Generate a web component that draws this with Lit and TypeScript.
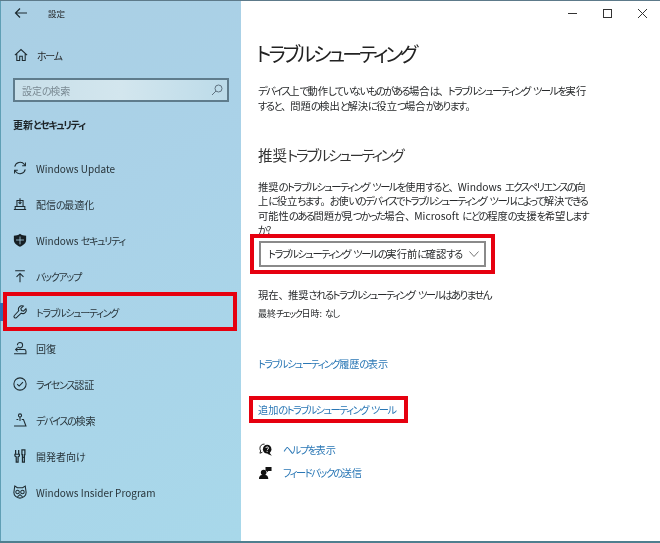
import { LitElement, html, css, svg } from "lit";
import { customElement } from "lit/decorators.js";

const ic = (body: unknown) => html`<svg class="ic" viewBox="0 0 16 16" fill="none" stroke="#1d2a30" stroke-width="1.2">${body}</svg>`;

const jp = (text: string) =>
  text.split(/([\u3040-\u30ff]+|[、。]+)/).map((part, i) => {
    if (i % 2 === 0) return part;
    return /[、。]/.test(part) ? html`<span class="p">${part}</span>` : html`<span class="k">${part}</span>`;
  });

const icons: Record<string, unknown> = {
  home: svg`<path d="M1 8.2 8 1.8 15 8.2M3.2 6.5V14.2H6.5V9.5H9.5V14.2H12.8V6.5"/>`,
  update: svg`<path d="M2 6.5A6.2 6.2 0 0 1 13 4L14 5.2M14 9.5A6.2 6.2 0 0 1 3 12L2 10.8"/><path d="M14.2 1.8V5.5H10.5M1.8 14.2V10.5H5.5"/>`,
  delivery: svg`<path d="M1 14.2H15M2.5 14.2V10.8H13.5V14.2M4.5 10.8V4H11.5V10.8M8 1.5V7.5M6.3 6 8 7.7 9.7 6"/>`,
  shield: svg`<path fill="#161f24" stroke="none" d="M8 .8C10 2.4 12.6 3 15 3V8C15 11.6 11.8 14.2 8 15.6 4.2 14.2 1 11.6 1 8V3C3.4 3 6 2.4 8 .8Z"/><path stroke="#a9d3e8" stroke-width=".9" d="M8 4V13M3.5 8H12.5"/>`,
  backup: svg`<path d="M2.5 2H13.5M8 15V5M4 9 8 5 12 9"/>`,
  wrench: svg`<path d="M14.8 4.2 12 7 9.6 6.4 9 4 11.8 1.2A4 4 0 0 0 6.6 6.6L1.6 12A1.7 1.7 0 0 0 4 14.4L9.4 9.4A4 4 0 0 0 14.8 4.2Z"/>`,
  recovery: svg`<path d="M1.2 14.5H14.8V11.8C14.8 10.6 13.9 9.8 12.8 9.8H3M5.2 7.6 3 9.8 5.2 12M5 4.8A3 3 0 1 1 11 4.8 3 3 0 0 1 5.5 6.5"/>`,
  check: svg`<circle cx="8" cy="8" r="7"/><path d="M4.8 8.2 7 10.4 11.4 5.8"/>`,
  find: svg`<circle cx="8" cy="2.8" r="1.8"/><path d="M8 4.6V9M1.2 14.8H14.8L12 7.5H10M6 7.5H4Z"/>`,
  dev: svg`<path stroke-width="1.4" d="M3 1V6M6.5 1V6M2.2 6H7.3V8L5.8 9V15H3.7V9L2.2 8ZM10.2 1H13.6V6.5H13V15H10.8V6.5H10.2Z"/><path d="M10.8 9.5H13"/>`,
  insider: svg`<path d="M2 1.2 5 3.2H11L14 1.2 15 8.5A7 6.5 0 0 1 8 15 7 6.5 0 0 1 1 8.5Z"/><circle cx="5.2" cy="8" r="2"/><circle cx="10.8" cy="8" r="2"/><path d="M5 13.5 8 11 11 13.5"/>`,
};

const nav = [
  ["update", "Windows Update"],
  ["delivery", "配信の最適化"],
  ["shield", "Windows セキュリティ"],
  ["backup", "バックアップ"],
  ["wrench", "トラブルシューティング"],
  ["recovery", "回復"],
  ["check", "ライセンス認証"],
  ["find", "デバイスの検索"],
  ["dev", "開発者向け"],
  ["insider", "Windows Insider Program"],
];

@customElement("app-root")
export class AppRoot extends LitElement {
  static styles = css`
    :host {
      display: block;
      width: 660px;
      height: 543px;
      overflow: hidden;
      font-family: "Noto Sans CJK JP", "Noto Sans", sans-serif;
      font-feature-settings: "palt";
      color: #26282a;
      font-size: 10.3px;
    }
    .k { letter-spacing: -0.13em; }
    .p { font-feature-settings: normal; letter-spacing: -0.1em; }
    .window {
      box-sizing: border-box;
      display: flex;
      width: 660px;
      height: 543px;
      border-top: 1px solid #5d7a8a;
      border-bottom: 2px solid #4f7f8f;
      background: #fff;
    }
    .side {
      box-sizing: border-box;
      width: 241px;
      flex: none;
      border-left: 1px solid #5f9fb5;
      background: linear-gradient(150deg, #aacfe4 0%, #aad2e8 40%, #a8d8ea 100%);
      display: flex;
      flex-direction: column;
      filter: blur(0.25px);
    }
    .top {
      height: 23px;
      display: flex;
      align-items: center;
      padding-left: 13px;
      font-size: 8.5px;
      gap: 20px;
    }
    .back { width: 14px; height: 12px; }
    .home {
      margin-top: 20px;
      height: 22px;
      display: flex;
      align-items: center;
      padding-left: 13px;
      gap: 9px;
      font-size: 10px;
    }
    .search {
      box-sizing: border-box;
      margin: 12px 0 0 12px;
      width: 216px;
      height: 24px;
      border: 2px solid #5f7c8c;
      background: linear-gradient(90deg, #c8dfe9, #d3e6ee 50%, #bcdbe9);
      display: flex;
      align-items: center;
      justify-content: space-between;
      padding: 0 4px 0 7px;
      color: #7a8a93;
      font-size: 10px;
    }
    .search svg { width: 12px; height: 12px; }
    .section {
      margin: 12px 0 0 12px;
      height: 22px;
      line-height: 22px;
      font-weight: 700;
      font-size: 10px;
      color: #1d2327;
    }
    .nav { margin-top: 14px; display: flex; flex-direction: column; }
    .row {
      position: relative;
      height: 36px;
      display: flex;
      align-items: center;
      padding-left: 12px;
      gap: 9px;
      font-size: 10px;
      color: #28343a;
    }
    .ic { width: 14px; height: 14px; flex: none; }
    .row.active::before {
      content: "";
      position: absolute;
      left: -1px;
      top: 9px;
      width: 3px;
      height: 18px;
      background: #2f6fb5;
    }
    .row.active::after {
      content: "";
      position: absolute;
      left: 2px;
      top: -2px;
      width: 226px;
      height: 31px;
      border: 4px solid #e6000f;
    }
    .main {
      flex: 1;
      position: relative;
      display: flex;
      flex-direction: column;
      padding-left: 17px;
      word-spacing: 1px;
      filter: blur(0.25px);
    }
    .main .k { letter-spacing: -0.15em; }
    .controls {
      position: absolute;
      top: 7px;
      right: 12px;
      display: flex;
      gap: 24px;
    }
    .controls svg { width: 11px; height: 11px; display: block; }
    h1 {
      margin: 38px 0 0 -2px;
      height: 30px;
      line-height: 30px;
      font-size: 20px;
      font-weight: 400;
      color: #222;
    }
    p { margin: 0; line-height: 15px; white-space: nowrap; }
    .intro { margin-top: 14px; }
    h2 {
      margin: 30px 0 0;
      height: 24px;
      line-height: 24px;
      font-size: 14.5px;
      font-weight: 400;
      color: #333;
    }
    .rec { margin-top: 13px; line-height: 14.4px; }
    .frame { position: relative; }
    .frame::after {
      content: "";
      position: absolute;
      border: 4px solid #e6000f;
      pointer-events: none;
    }
    .dd {
      box-sizing: border-box;
      margin: 3px 0 0 1px;
      width: 227px;
      height: 26px;
      border: 2px solid #8a8a8a;
      display: flex;
      align-items: center;
      justify-content: space-between;
      padding: 0 5px 0 7px;
      white-space: nowrap;
    }
    .dd svg { width: 10px; height: 6px; }
    .dd.frame::after { inset: -9px -11px; }
    .none { margin-top: 20px; }
    .last { margin-top: 4px; font-size: 9px; line-height: 16px; }
    a { color: #2a77b5; display: block; text-decoration: none; font-size: 10.2px; line-height: 16px; }
    .l1 { margin-top: 34px; }
    .l2 { margin-top: 30px; width: max-content; }
    .l2.frame::after { inset: -6px -13px -5px -9px; }
    .help { margin: 24px 0 0 1px; display: flex; flex-direction: column; gap: 7px; }
    .help div { display: flex; align-items: center; gap: 11px; height: 16px; }
    .help svg { width: 13px; height: 13px; flex: none; }
  `;

  render() {
    return html`<div class="window">
      <aside class="side">
        <div class="top">
          <svg class="back" viewBox="0 0 14 12" fill="none" stroke="#1d2a30" stroke-width="1.2"><path d="M13 6H1.5M6 1.5 1.5 6 6 10.5"/></svg>
          <span>設定</span>
        </div>
        <div class="home">${ic(icons.home)}<span>${jp("ホーム")}</span></div>
        <div class="search">
          <span>${jp("設定の検索")}</span>
          <svg viewBox="0 0 12 12" fill="none" stroke="#5f7280"><circle cx="7.5" cy="4.5" r="3.5"/><path d="M5 7 1 11"/></svg>
        </div>
        <div class="section">${jp("更新とセキュリティ")}</div>
        <div class="nav">
          ${nav.map(([i, t]) => html`<div class="row ${i === "wrench" ? "active" : ""}">${ic(icons[i])}<span>${jp(t)}</span></div>`)}
        </div>
      </aside>
      <main class="main">
        <div class="controls">
          <svg viewBox="0 0 11 11" stroke="#333" fill="none"><path d="M1 5.5H10"/></svg>
          <svg viewBox="0 0 11 11" stroke="#333" fill="none"><rect x="1.5" y="1.5" width="8" height="8"/></svg>
          <svg viewBox="0 0 11 11" stroke="#333" fill="none"><path d="M1 1 10 10M10 1 1 10"/></svg>
        </div>
        <h1>${jp("トラブルシューティング")}</h1>
        <p class="intro">${jp("デバイス上で動作していないものがある場合は、トラブルシューティング ツールを実行")}<br />${jp("すると、問題の検出と解決に役立つ場合があります。")}</p>
        <h2>${jp("推奨トラブルシューティング")}</h2>
        <p class="rec">${jp("推奨のトラブルシューティング ツールを使用すると、Windows エクスペリエンスの向")}<br />${jp("上に役立ちます。お使いのデバイスでトラブルシューティング ツールによって解決できる")}<br />${jp("可能性のある問題が見つかった場合、Microsoft にどの程度の支援を希望します")}<br />${jp("か?")}</p>
        <div class="dd frame">
          <span>${jp("トラブルシューティング ツールの実行前に確認する")}</span>
          <svg viewBox="0 0 10 6" fill="none" stroke="#777"><path d="M.5 .5 5 5.5 9.5 .5"/></svg>
        </div>
        <p class="none">${jp("現在、推奨されるトラブルシューティング ツールはありません")}</p>
        <p class="last">${jp("最終チェック日時: なし")}</p>
        <a class="l1">${jp("トラブルシューティング履歴の表示")}</a>
        <a class="l2 frame">${jp("追加のトラブルシューティング ツール")}</a>
        <div class="help">
          <div>
            <svg viewBox="0 0 14 14" fill="#111"><path d="M6 1.2A4.5 4.5 0 0 0 1 6C1 7 1.3 7.8 1.8 8.5L1 11 3.6 10" fill="none" stroke="#111"/><circle cx="8.8" cy="6.6" r="4.6"/><path d="M11 10 13.8 13.8 8.8 11.5Z"/><path d="M7.3 5.4C7.5 3.8 10.2 3.8 10.3 5.4 10.3 6.5 8.8 6.5 8.8 7.8M8.8 8.6V9.6" fill="none" stroke="#fff"/></svg>
            <a>${jp("ヘルプを表示")}</a>
          </div>
          <div>
            <svg viewBox="0 0 14 14" fill="#111"><circle cx="5" cy="7" r="3"/><path d="M0 14C0 10.5 2 9.5 5 9.5S10 10.5 10 14ZM7 1H13.5V5.5H10L8.5 7V5.5H7Z"/></svg>
            <a>${jp("フィードバックの送信")}</a>
          </div>
        </div>
      </main>
    </div>`;
  }
}
